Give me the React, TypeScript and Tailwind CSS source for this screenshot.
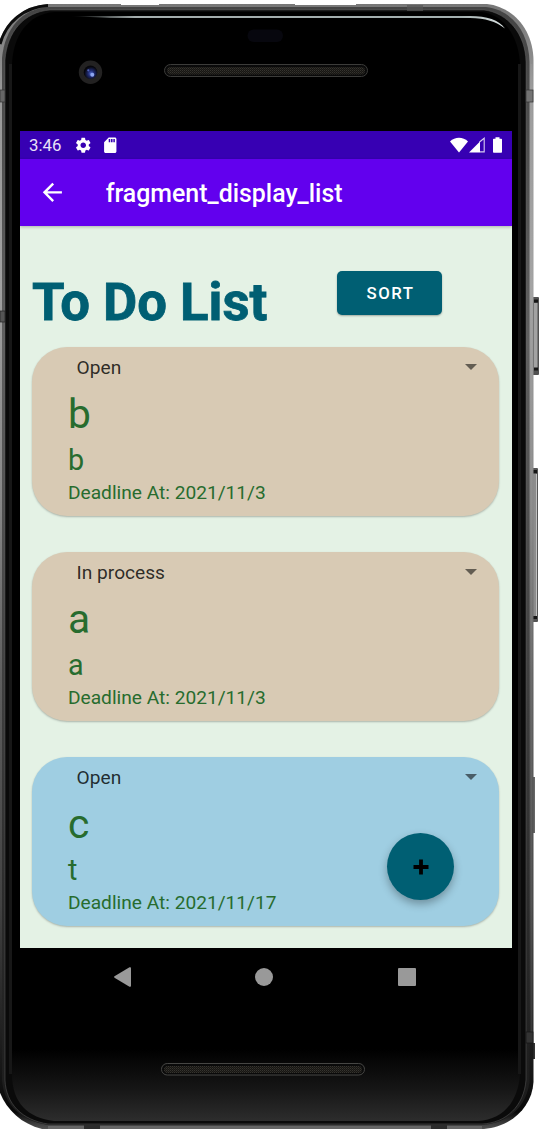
import type { ReactNode } from "react";
import { MdArrowBack, MdSdCard, MdSettings } from "react-icons/md";

type Task = { status: string; title: string; detail: string; deadline: string; color: string };

const tasks: Task[] = [
  { status: "Open", title: "b", detail: "b", deadline: "2021/11/3", color: "bg-[#d8cab4]" },
  { status: "In process", title: "a", detail: "a", deadline: "2021/11/3", color: "bg-[#d8cab4]" },
  { status: "Open", title: "c", detail: "t", deadline: "2021/11/17", color: "bg-[#9fcee2]" },
];

/* Metal shell, glass edge, side keys and lenses of the handset. */
function DeviceShell() {
  return (
    <svg className="absolute inset-0" width="540" height="1129" viewBox="0 0 540 1129" aria-hidden="true">
      <defs>
        <linearGradient id="metal" x1="0" y1="0" x2="0" y2="1">
          <stop offset="0" stopColor="#777" />
          <stop offset="0.08" stopColor="#999" />
          <stop offset="0.25" stopColor="#a0a0a0" />
          <stop offset="0.45" stopColor="#858585" />
          <stop offset="0.6" stopColor="#5e5e5e" />
          <stop offset="0.8" stopColor="#424242" />
          <stop offset="0.95" stopColor="#161616" />
          <stop offset="0.985" stopColor="#080808" />
          <stop offset="1" stopColor="#555" />
        </linearGradient>
        <linearGradient id="metalInner" x1="0" y1="0" x2="0" y2="1">
          <stop offset="0" stopColor="#444" />
          <stop offset="0.3" stopColor="#606060" />
          <stop offset="0.6" stopColor="#404040" />
          <stop offset="1" stopColor="#1a1a1a" />
        </linearGradient>
        <linearGradient id="chin" x1="0" y1="0" x2="0" y2="1">
          <stop offset="0" stopColor="#000" />
          <stop offset="0.935" stopColor="#000" />
          <stop offset="0.97" stopColor="#151515" />
          <stop offset="1" stopColor="#2d2d2d" />
        </linearGradient>
        <linearGradient id="shine" x1="0" y1="0" x2="1" y2="0">
          <stop offset="0" stopColor="#8f9999" stopOpacity="0" />
          <stop offset="0.15" stopColor="#a4adad" />
          <stop offset="0.9" stopColor="#a4b0b0" />
          <stop offset="1" stopColor="#dce4e4" />
        </linearGradient>
        <pattern id="mesh" width="2" height="2" patternUnits="userSpaceOnUse">
          <rect width="2" height="2" fill="#171613" />
          <rect width="1" height="1" fill="#36342f" />
          <rect x="1" y="1" width="1" height="1" fill="#282622" />
        </pattern>
        <radialGradient id="lens" cx="0.55" cy="0.6" r="0.5">
          <stop offset="0" stopColor="#526bd0" />
          <stop offset="0.45" stopColor="#202b70" />
          <stop offset="1" stopColor="#07070c" />
        </radialGradient>
      </defs>

      <rect x="531" y="297" width="8" height="78" rx="1" fill="#515151" />
      <rect x="534" y="303" width="3.5" height="66" fill="#a2a2a2" />
      <rect x="534" y="299.500" width="4" height="3" fill="#161616" />
      <rect x="534" y="367.500" width="4" height="3" fill="#161616" />
      <rect x="531" y="468" width="7" height="154" rx="1" fill="#555" />
      <rect x="533" y="474" width="3" height="142" fill="#8c8c8c" />
      <rect x="536" y="474" width="1" height="142" fill="#c0c0c0" />
      <rect x="533" y="470" width="4" height="3" fill="#161616" />
      <rect x="533" y="616" width="4" height="3" fill="#161616" />
      <rect x="532" y="777" width="3" height="56" fill="#666" />
      <rect x="532" y="1043" width="3" height="16" fill="#333" />

      <path d="M48 4H487C514 7 533 30 533.500 60V1082C532 1108 510 1127 484 1129H42C18 1123 3 1106 -3 1084V52C1 25 20 6 48 4Z" fill="url(#metal)" />
      <path d="M48 7H486C512 10 529 32 529.500 62V1082C526 1108 508 1123 482 1125H48C22 1121 4 1106 2 1080V58C5 28 22 9 48 7Z" fill="url(#metalInner)" />
      <path d="M0 44C6 22 24 7 48 5.500" stroke="#0c0c0c" strokeWidth="3" fill="none" />
      <path d="M50 10H484C508 13 525.500 34 526 62V1080C524 1106 506 1123 482 1124H48C22 1120 6 1104 5 1080V60C7 32 24 12 50 10Z" fill="#0a0a0a" stroke="#666" strokeOpacity="0.45" />
      <path d="M54 12H482C505 15 519 38 520 64V1074C518 1103 502 1120 478 1121H54C28 1118 12 1103 12 1074V64C13 36 28 14 54 12Z" fill="url(#chin)" />
      <path d="M10.500 64V1074M519.500 64V1074" stroke="#171717" strokeWidth="3" fill="none" />
      <path d="M531.500 64V1040" stroke="#bbb" strokeOpacity="0.15" strokeWidth="2" />

      <rect x="0" y="90" width="5" height="12" fill="#666" stroke="#333" strokeWidth="0.7" />
      <rect x="526" y="90" width="7" height="12" fill="#737373" stroke="#333" strokeWidth="0.7" />
      <rect x="0" y="311" width="5" height="11" fill="#555" stroke="#222" strokeWidth="0.7" />
      <rect x="526" y="1032" width="7" height="11" fill="#333" stroke="#151515" strokeWidth="0.7" />
      <rect x="407" y="5" width="16" height="6" fill="#555" fillOpacity="0.7" />
      <path d="M121 4H159V5H121ZM295 4H356V5H295Z" fill="#fff" />
      <path d="M48 1126H482V1129H48Z" fill="#666" />
      <path d="M84 1125H100V1129H84ZM431 1125H447V1129H431Z" fill="#2c2c2c" />

      <path d="M70 16H470C487 16 499 20 505 28.500C495 21 486 18.500 470 18H110Z" fill="url(#shine)" />
      <rect x="247.500" y="29.500" width="35.500" height="12.500" rx="6.200" fill="#07070e" />

      <circle cx="90.500" cy="72.200" r="11.700" fill="#232222" />
      <circle cx="90.500" cy="72.200" r="6.800" fill="url(#lens)" />
      <circle cx="92.300" cy="74.700" r="2" fill="#8ea6f0" />
      <circle cx="88.300" cy="70.300" r="1.100" fill="#5264bb" />

      <rect x="164.500" y="64.500" width="203" height="12" rx="6" fill="#0a0a0a" stroke="#3c3c3a" />
      <rect x="167" y="67" width="198" height="7.500" rx="3.700" fill="url(#mesh)" />
      <rect x="161.500" y="1063.500" width="203" height="11.500" rx="5.700" fill="#0a0a0a" stroke="#464644" />
      <rect x="164" y="1066" width="198" height="7" rx="3.500" fill="url(#mesh)" />
    </svg>
  );
}

function StatusBar() {
  return (
    <div className="flex h-7 items-center bg-[#3700b3] pl-[9px] pr-[10px] text-white">
      <span className="w-[45px] pt-px text-[16.8px] leading-[27px] text-[#e9e2f7]">3:46</span>
      <MdSettings size={18.5} />
      <MdSdCard size={18.5} className="ml-[8px]" />
      <div className="ml-auto flex items-center">
        <svg width="18" height="16" viewBox="0 0 18 16">
          <path d="M0 4.500C5-0.500 13-0.500 18 4.500L9 15.500Z" fill="currentColor" />
        </svg>
        <svg className="ml-px" width="16" height="16" viewBox="0 0 16 16">
          <path d="M0 15.500 11 4.500V15.500Z" fill="currentColor" />
          <path d="M10.500 5 15.200 1.200V14.900H11" fill="none" stroke="currentColor" strokeOpacity="0.8" strokeWidth="1.100" />
        </svg>
        <svg className="ml-2" width="9" height="16" viewBox="0 0 9 16">
          <path d="M2.500 0.300H6.500V1.800H8.200Q9 1.800 9 2.600V15Q9 15.800 8.200 15.800H.8Q0 15.800 0 15V2.600Q0 1.800.8 1.800H2.500Z" fill="currentColor" />
        </svg>
      </div>
    </div>
  );
}

function AppBar({ children }: { children: ReactNode }) {
  return (
    <div className="relative z-10 flex h-[67px] items-center bg-[#6200ee] pl-[18px] text-white shadow-[0_1px_3px_rgba(0,0,0,0.25)]">
      <MdArrowBack size={28.7} />
      <h1 className="ml-[39px] pt-[4px] text-[24.9px] font-medium leading-none">{children}</h1>
    </div>
  );
}

function TaskCard({ task }: { task: Task }) {
  return (
    <article className={`h-[169px] shrink-0 rounded-[35px] pl-[36.400px] pr-[22.500px] text-[#276c2e] shadow-[0_1px_2px_rgba(0,0,0,0.25)] ${task.color}`}>
      <div className="flex h-[41px] items-center justify-between pl-[8.600px] text-[19.15px] text-black/80">
        <span className="pt-px">{task.status}</span>
        <svg width="12" height="6" viewBox="0 0 12 6" className="-mt-[2px]">
          <path d="M0 0H12L6 6Z" fill="#000" fillOpacity="0.54" />
        </svg>
      </div>
      <h3 className="text-[40.7px] leading-[53px]">{task.title}</h3>
      <p className="text-[28.7px] leading-[38px]">{task.detail}</p>
      <p className="pt-px text-[19.15px] leading-[26px]">Deadline At: {task.deadline}</p>
    </article>
  );
}

function NavigationBar() {
  return (
    <div className="flex h-[57px] items-center justify-between pl-[93.500px] pr-[96px] text-[#999]">
      <svg width="17" height="20" viewBox="0 0 17 20">
        <path d="M.5 9.300 15.500.3Q17-.3 17 1.200V18.800Q17 20.300 15.500 19.700L.5 10.700Q-.3 10 .5 9.300Z" fill="currentColor" />
      </svg>
      <div className="size-[18px] rounded-full bg-[#999]" />
      <div className="size-[18px] rounded-[1px] bg-[#999]" />
    </div>
  );
}

export default function App() {
  return (
    <div className="relative h-[1129px] w-[540px] overflow-hidden bg-white pl-5 pt-[131px] font-[Roboto,sans-serif]">
      <DeviceShell />
      <main className="relative w-[492px]">
        <StatusBar />
        <AppBar>fragment_display_list</AppBar>
        <section className="relative h-[722.300px] overflow-hidden bg-[#e4f2e5]">
          <header className="flex h-[121px] items-start pl-[12px]">
            <h2 className="mt-[45.500px] w-[305px] text-[52.7px] font-bold leading-[60px] text-[#005f73] [-webkit-text-stroke:0.8px_#005f73]">To Do List</h2>
            <button className="mt-[45px] h-[44px] w-[105px] rounded-[5px] bg-[#005f73] pl-[2px] pt-[2px] text-[16.76px] font-medium tracking-[0.0892em] text-white shadow-[0_1px_2px_rgba(0,0,0,0.3)]">SORT</button>
          </header>
          <div className="flex flex-col gap-[36px] pl-[11.600px] pr-[12.600px]">
            {tasks.map((task, i) => (
              <TaskCard key={i} task={task} />
            ))}
          </div>
          <button aria-label="Add" className="absolute bottom-[48.300px] right-[58px] flex size-[67px] items-center justify-center rounded-full bg-[#005f73] shadow-[0_4px_9px_rgba(0,0,0,0.3)]">
            <svg width="16" height="16" viewBox="0 0 16 16">
              <path d="M8 .5V15.500M.5 8H15.500" stroke="#000" strokeWidth="3.800" />
            </svg>
          </button>
        </section>
        <NavigationBar />
      </main>
    </div>
  );
}
